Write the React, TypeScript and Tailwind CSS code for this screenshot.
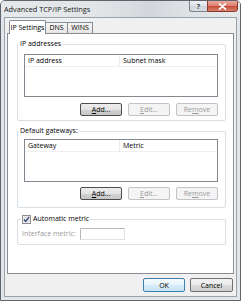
import React from "react";

type BtnKind = "normal" | "focus" | "default" | "disabled";

function Btn({ children, w, h, kind }: { children: React.ReactNode; w: string; h: string; kind: BtnKind }) {
  const base = "flex items-center justify-center rounded-[2px] border leading-none";
  const styles: Record<BtnKind, string> = {
    normal:
      "border-[#707070] bg-[linear-gradient(#f2f2f2_0%,#ebebeb_50%,#dddddd_50%,#cfcfcf_100%)] text-black",
    focus:
      "border-[#4d4d4d] bg-[linear-gradient(#ededed_0%,#e3e3e3_50%,#d3d3d3_50%,#c6c6c6_100%)] text-black",
    default:
      "border-[#3c7fb1] bg-[linear-gradient(#f4fafd_0%,#e7f3fb_50%,#d6ebf9_50%,#c8e3f5_100%)] text-black",
    disabled: "border-[#c0c4c7] bg-[#f4f4f4] text-[#9a9a9a]",
  };
  return <div className={`${base} ${styles[kind]} ${w} ${h}`}>{children}</div>;
}

function ListBox({ c1, c2 }: { c1: string; c2: string }) {
  return (
    <div className="h-[43px] border border-[#828790] bg-white flex flex-col">
      <div className="h-[12px] flex items-center border-b border-[#f0f0f0]">
        <div className="w-[95px] h-full pl-[3px] flex items-center border-r border-[#ececec]">{c1}</div>
        <div className="pl-[3px] flex items-center">{c2}</div>
      </div>
    </div>
  );
}

function ButtonTriple({ mt }: { mt: string }) {
  return (
    <div className={`flex justify-end gap-[6px] ${mt}`}>
      <Btn w="w-[42px]" h="h-[13px]" kind="focus">
        <span>
          <u>A</u>dd...
        </span>
      </Btn>
      <Btn w="w-[42px]" h="h-[13px]" kind="disabled">
        <span>
          <u>E</u>dit...
        </span>
      </Btn>
      <Btn w="w-[42px]" h="h-[13px]" kind="disabled">
        <span>
          Re<u>m</u>ove
        </span>
      </Btn>
    </div>
  );
}

export default function App() {
  return (
    <div className="w-[241px] h-[301px] font-['Open_Sans',sans-serif] text-[7px] leading-[10px] text-black select-none">
      <div className="w-full h-full border border-[#5f646a] rounded-t-[5px] bg-[#e2e6ea] flex flex-col overflow-hidden">
        {/* Title bar */}
        <div className="h-[16px] shrink-0 flex items-start justify-between pl-[3px] pr-[2px] bg-[linear-gradient(90deg,#e6e9ec_0%,#e2e5e8_40%,#d3d7db_62%,#e0e3e6_80%,#e6e9ec_100%)]">
          <span className="mt-[3px] text-[7.3px] text-[#1a1a1a] whitespace-nowrap">Advanced TCP/IP Settings</span>
          <div className="flex -mt-[1px]">
            <div className="w-[18px] h-[12px] border border-[#7d848c] border-r-0 rounded-bl-[3px] bg-[linear-gradient(#eef1f4_0%,#dde2e7_50%,#cdd3da_50%,#d9dee3_100%)] flex items-center justify-center">
              <span className="text-[7px] leading-none text-[#3b3f44] font-bold">?</span>
            </div>
            <div className="w-[31px] h-[12px] border border-[#8a3b30] rounded-br-[3px] bg-[linear-gradient(#eaa99c_0%,#de8372_45%,#c9513c_55%,#d7806c_100%)] flex items-center justify-center">
              <svg width="9" height="7" viewBox="0 0 9 7">
                <path d="M1.5 0.8 L7.5 6.2 M7.5 0.8 L1.5 6.2" stroke="#ffffff" strokeWidth="1.6" strokeLinecap="round" />
              </svg>
            </div>
          </div>
        </div>

        {/* Client area */}
        <div className="mx-[3px] h-[280px] shrink-0 border border-[#9aa2ab] bg-[#f0f0f0] flex flex-col px-[2px] pt-[2px]">
          {/* Tabs */}
          <div className="h-[13px] flex items-end pl-[2px]">
            <div className="w-[37px] h-[14px] -mb-[1px] relative z-10 border border-[#898c95] border-b-0 rounded-t-[2px] bg-white flex items-center justify-center whitespace-nowrap">
              IP Settings
            </div>
            <div className="w-[22px] h-[11px] border-t border-r border-[#898c95] bg-[linear-gradient(#f6f6f6,#e6e6e6)] flex items-center justify-center">
              DNS
            </div>
            <div className="w-[25px] h-[11px] border-t border-r border-[#898c95] bg-[linear-gradient(#f6f6f6,#e6e6e6)] flex items-center justify-center">
              WINS
            </div>
          </div>

          {/* Tab panel */}
          <div className="h-[241px] border border-[#898c95] bg-white flex flex-col pl-[9px] pr-[7px]">
            {/* IP addresses */}
            <fieldset className="mt-[5px] border border-[#d5dfe5] rounded-[2px]">
              <legend className="ml-[1px] px-[1px] leading-[10px]">IP addresses</legend>
              <div className="pl-[6px] pr-[7px] pt-[5px] pb-[4px]">
                <ListBox c1="IP address" c2="Subnet mask" />
                <ButtonTriple mt="mt-[6px]" />
              </div>
            </fieldset>

            {/* Default gateways */}
            <fieldset className="mt-[5px] border border-[#d5dfe5] rounded-[2px]">
              <legend className="ml-[1px] px-[1px] leading-[10px]">Default gateways:</legend>
              <div className="pl-[6px] pr-[7px] pt-[3px] pb-[7px]">
                <ListBox c1="Gateway" c2="Metric" />
                <ButtonTriple mt="mt-[5px]" />
              </div>
            </fieldset>

            {/* Automatic metric */}
            <fieldset className="mt-[6px] border border-[#d5dfe5] rounded-[2px]">
              <legend className="ml-[3px] px-[1px] leading-[10px]">
                <span className="flex items-center gap-[2px]">
                  <svg width="9" height="9" viewBox="0 0 9 9">
                    <rect x="0.5" y="0.5" width="8" height="8" fill="#f4f4f4" stroke="#8e8f8f" />
                    <rect x="1.5" y="1.5" width="6" height="6" fill="#e4e4e4" />
                    <path d="M2 4.6 L3.7 6.4 L7.2 1.8" fill="none" stroke="#3d4f7d" strokeWidth="1.4" />
                  </svg>
                  <span>Automatic metric</span>
                </span>
              </legend>
              <div className="pl-[4px] pt-[4px] pb-[4px] flex items-center">
                <span className="w-[58px] text-[#9a9a9a] whitespace-nowrap">Interface metric:</span>
                <div className="w-[45px] h-[12px] border border-[#b8b8b8] border-r-[#e2e2e2] border-b-[#e2e2e2] bg-white" />
              </div>
            </fieldset>
          </div>

          {/* OK / Cancel */}
          <div className="mt-[4px] flex justify-end gap-[5px] pr-[1px]">
            <Btn w="w-[42px]" h="h-[14px]" kind="default">
              OK
            </Btn>
            <Btn w="w-[43px]" h="h-[14px]" kind="normal">
              Cancel
            </Btn>
          </div>
        </div>
      </div>
    </div>
  );
}
